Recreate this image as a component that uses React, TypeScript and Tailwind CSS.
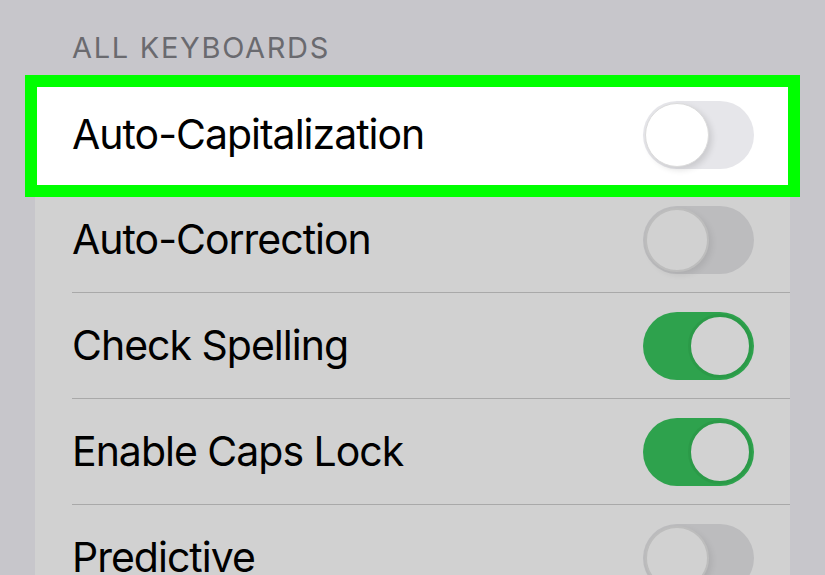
import React from 'react';

type Row = { label: string; on: boolean };

const rows: Row[] = [
  { label: 'Auto-Capitalization', on: false },
  { label: 'Auto-Correction', on: false },
  { label: 'Check Spelling', on: true },
  { label: 'Enable Caps Lock', on: true },
  { label: 'Predictive', on: false },
];

function Toggle({ on, lit }: { on: boolean; lit?: boolean }) {
  if (on) {
    return (
      <div className="flex h-[68px] w-[111px] shrink-0 items-center justify-end rounded-full bg-[#2ea24d] p-[2px]">
        <div className="h-[64px] w-[64px] rounded-full border-[3px] border-[#2b9a48] bg-[#d2d2d2]" />
      </div>
    );
  }
  return (
    <div
      className={
        lit
          ? 'flex h-[68px] w-[111px] shrink-0 items-center rounded-full bg-[#e6e6ea] p-[2px]'
          : 'flex h-[68px] w-[111px] shrink-0 items-center rounded-full bg-[#bcbcbe] p-[2px]'
      }
    >
      <div
        className={
          lit
            ? 'h-[64px] w-[64px] rounded-full border border-[#dcdcdc] bg-white shadow-[3px_3px_6px_rgba(0,0,0,0.12)]'
            : 'h-[64px] w-[64px] rounded-full border-2 border-[#bdbdbd] bg-[#d1d1d1] shadow-[3px_3px_6px_rgba(0,0,0,0.08)]'
        }
      />
    </div>
  );
}

export default function App() {
  return (
    <div
      className="h-[575px] w-[825px] overflow-hidden bg-[#c7c6cb] pl-[35px]"
      style={{ fontFamily: 'Inter, "Noto Sans", sans-serif' }}
    >
      <div className="flex h-[82px] items-start pl-[37px] pt-[26px] text-[29px] tracking-[1.7px] text-[#6a6a6f]">
        ALL KEYBOARDS
      </div>
      <div className="w-[755px] bg-[#d1d1d1]">
        {rows.map((row, i) => (
          <div key={row.label} className="relative">
            {i === 0 && (
              <div className="absolute left-[-10px] top-[-7px] h-[122px] w-[775px] border-[12px] border-[#00ff00] bg-white" />
            )}
            <div className="relative flex h-[105px] items-center justify-between pl-[37px] pr-[36px]">
              <span className="text-[41px] leading-none tracking-[-1px] text-black">{row.label}</span>
              <Toggle on={row.on} lit={i === 0} />
            </div>
            {i > 0 && i < rows.length - 1 && <div className="ml-[37px] h-px bg-[#a9a9a9]" />}
          </div>
        ))}
      </div>
    </div>
  );
}
